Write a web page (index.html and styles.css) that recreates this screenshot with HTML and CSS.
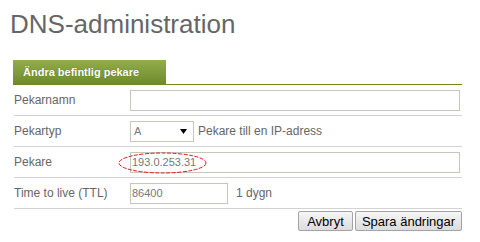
FILE: index.html
```html
<!DOCTYPE html>
<html lang="sv">
<head>
<meta charset="utf-8">
<title>DNS-administration</title>
<link rel="stylesheet" href="styles.css">
</head>
<body>
<div class="page">
  <h1 class="title">DNS-administration</h1>
  <div class="tabbar"><div class="tab">Ändra befintlig pekare</div></div>
  <div class="form">
    <div class="row">
      <div class="label">Pekarnamn</div>
      <div class="field"><div class="input wide"></div></div>
    </div>
    <div class="row">
      <div class="label">Pekartyp</div>
      <div class="field">
        <div class="select"><span>A</span><svg class="arrow" width="7" height="5" viewBox="0 0 7 5"><path d="M0 0H7L3.5 5Z" fill="#000"/></svg></div>
        <span class="hint">Pekare till en IP-adress</span>
      </div>
    </div>
    <div class="row">
      <div class="label">Pekare</div>
      <div class="field mark-wrap">
        <div class="input wide">193.0.253.31</div>
        <svg class="mark" width="89" height="22" viewBox="0 0 89 22"><ellipse cx="44.5" cy="11" rx="43.5" ry="10" fill="none" stroke="#e0141e" stroke-width="1" stroke-dasharray="4 1.5"/></svg>
      </div>
    </div>
    <div class="row">
      <div class="label">Time to live (TTL)</div>
      <div class="field">
        <div class="input short">86400</div>
        <span class="hint unit">1 dygn</span>
      </div>
    </div>
  </div>
  <div class="actions">
    <button class="btn cancel">Avbryt</button>
    <button class="btn save">Spara ändringar</button>
  </div>
</div>
</body>
</html>
```

FILE: styles.css
```css
html, body {
  margin: 0;
  padding: 0;
  background: #fff;
}
body {
  font-family: "Liberation Sans", Arial, sans-serif;
  color: #666;
}
.page {
  padding: 9px 18px 0 13px;
  width: 449px;
}
.title {
  margin: 0 0 21px -3px;
  font-size: 26px;
  line-height: 30px;
  font-weight: normal;
  color: #666;
}
.tabbar {
  border-bottom: 1px solid #6d8a20;
  display: flex;
}
.tab {
  width: 143px;
  height: 24px;
  padding-left: 10px;
  background: linear-gradient(#93ad4c, #6e8b2b);
  color: #fff;
  font-weight: bold;
  font-size: 11px;
  line-height: 24px;
  text-shadow: 0 0 1px rgba(40, 60, 0, 0.5);
}
.form {
  margin-left: 1px;
}
.row {
  display: flex;
  align-items: center;
  height: 30px;
  border-bottom: 1px solid #d2d2d2;
}
.label {
  width: 116px;
  font-size: 12px;
  color: #666;
}
.field {
  display: flex;
  align-items: center;
  flex: 1;
}
.mark-wrap {
  position: relative;
}
.input {
  box-sizing: border-box;
  height: 21px;
  border: 1px solid #c6c6b9;
  font-size: 11px;
  line-height: 19px;
  padding-left: 1px;
  color: #777;
}
.wide {
  width: 330px;
}
.short {
  width: 98px;
}
.select {
  box-sizing: border-box;
  width: 64px;
  height: 21px;
  border: 1px solid #c6c6b9;
  display: flex;
  align-items: center;
  justify-content: space-between;
  padding: 0 6px 0 3px;
  font-size: 11px;
  color: #777;
}
.arrow {
  display: block;
}
.hint {
  font-size: 12px;
  color: #666;
  margin-left: 4px;
}
.unit {
  margin-left: 8px;
}
.mark {
  position: absolute;
  left: -12px;
  top: 0;
}
.actions {
  display: flex;
  justify-content: flex-end;
  gap: 2px;
  margin-top: 2px;
}
.btn {
  box-sizing: border-box;
  height: 20px;
  padding: 0;
  font-family: "Liberation Sans", Arial, sans-serif;
  font-size: 13px;
  color: #000;
  background: linear-gradient(#f6f6f6, #dcdcdc);
  border: 1px solid #a3a3a3;
  border-radius: 2px;
}
.cancel {
  width: 55px;
}
.save {
  width: 107px;
}
```
